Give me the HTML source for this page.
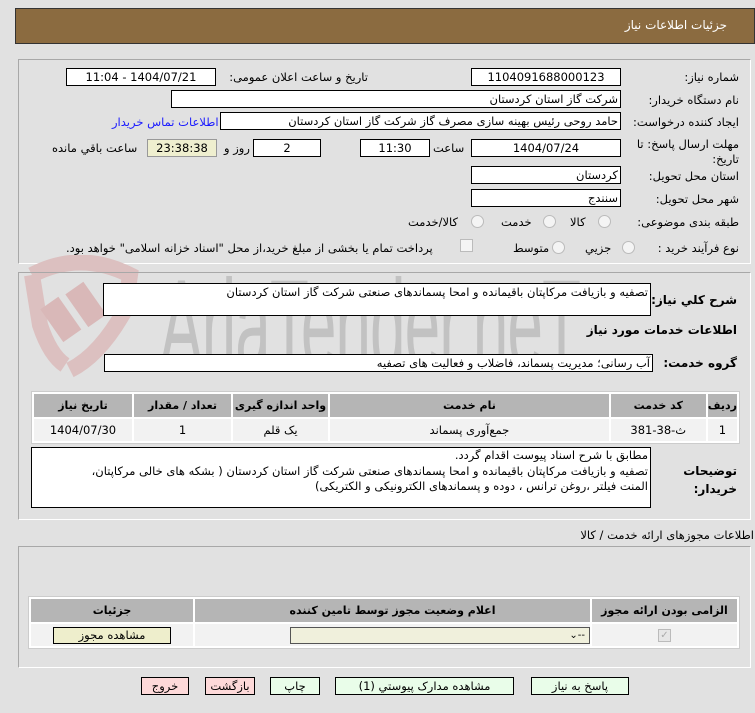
<!DOCTYPE html>
<html><head><meta charset="utf-8"><style>
*{margin:0;padding:0;box-sizing:border-box}
body{width:755px;height:713px;background:#e1e1e1;position:relative;overflow:hidden;font-family:"DejaVu Sans",sans-serif;font-size:11.5px;color:#000}
.a{position:absolute;white-space:nowrap}
.r{position:absolute;white-space:nowrap;direction:rtl;text-align:right}
.in{position:absolute;background:#fff;border:1px solid #000;direction:rtl;text-align:center;line-height:16px;white-space:nowrap;overflow:hidden}
.lbl{position:absolute;direction:rtl;white-space:nowrap}
.panel{position:absolute;border:1px solid #a8a8a8;border-right-color:#fff;border-bottom-color:#fff}
.rad{position:absolute;width:13px;height:13px;border-radius:50%;border:1px solid #bbb;background:#f4f4f4}
table{border-collapse:separate;border-spacing:2px;position:absolute;background:#fff;border:1px solid #ccc}
th{background:#b5b5b5;font-weight:bold;font-size:11px;height:23px;direction:rtl}
td{background:#f2f2f2;text-align:center;height:22px;direction:rtl}
.btn{position:absolute;border:1px solid #000;background:#e9fde9;text-align:center;line-height:16px;height:18px;direction:rtl}
</style></head><body>
<div class="a" style="left:15px;top:8px;width:740px;height:36px;background:#8b6b40;border:1px solid #333"></div>
<div class="r" style="right:28px;top:18px;color:#fff;font-size:12px">جزئیات اطلاعات نیاز</div>

<div class="panel" style="left:18px;top:59px;width:733px;height:205px"></div>
<!-- watermark -->
<svg class="a" style="left:20px;top:255px" width="130" height="130" viewBox="0 0 130 130"><path d="M12 20 Q60 -5 110 20 L105 55 Q80 100 50 115" fill="none" stroke="#dcc0c0" stroke-width="16"/><path d="M12 20 L20 70 Q30 100 45 110" fill="none" stroke="#dcc0c0" stroke-width="16"/><rect x="30" y="45" width="22" height="40" fill="#d9b8b8" transform="rotate(-35 40 65)"/><rect x="55" y="30" width="22" height="40" fill="#d9b8b8" transform="rotate(-35 65 50)"/></svg>
<div class="a" style="left:160px;top:262px;font-family:'Liberation Sans',sans-serif;font-size:128px;color:#c2c2c2;letter-spacing:-2px;transform:scaleX(0.5);transform-origin:left top;line-height:128px">AriaTender.neT</div>

<div class="lbl" style="right:16px;top:70px">شماره نیاز:</div>
<div class="in" style="left:471px;top:68px;width:150px;height:18px">1104091688000123</div>
<div class="lbl" style="right:387px;top:70px">تاریخ و ساعت اعلان عمومی:</div>
<div class="in" style="left:66px;top:68px;width:150px;height:18px">1404/07/21 - 11:04</div>

<div class="lbl" style="right:16px;top:93px">نام دستگاه خریدار:</div>
<div class="in" style="left:171px;top:90px;width:450px;height:18px;text-align:right;padding-right:2px">شرکت گاز استان کردستان</div>

<div class="lbl" style="right:16px;top:115px">ایجاد کننده درخواست:</div>
<div class="in" style="left:220px;top:112px;width:401px;height:18px;text-align:right;padding-right:2px">حامد روحی رئیس بهینه سازی مصرف گاز شرکت گاز استان کردستان</div>
<div class="lbl" style="left:112px;top:115px;color:#1a1aff">اطلاعات تماس خریدار</div>

<div class="lbl" style="right:16px;top:137px;text-align:right;line-height:15px">مهلت ارسال پاسخ: تا<br>تاریخ:</div>
<div class="in" style="left:471px;top:139px;width:150px;height:18px">1404/07/24</div>
<div class="lbl" style="left:433px;top:141px">ساعت</div>
<div class="in" style="left:360px;top:139px;width:70px;height:18px">11:30</div>
<div class="in" style="left:253px;top:139px;width:68px;height:18px">2</div>
<div class="lbl" style="left:224px;top:141px">روز و</div>
<div class="in" style="left:147px;top:139px;width:70px;height:18px;background:#efefcf;border-color:#999">23:38:38</div>
<div class="lbl" style="left:52px;top:141px">ساعت باقي مانده</div>

<div class="lbl" style="right:16px;top:169px">استان محل تحویل:</div>
<div class="in" style="left:471px;top:166px;width:150px;height:18px;text-align:right;padding-right:2px">کردستان</div>
<div class="lbl" style="right:16px;top:192px">شهر محل تحویل:</div>
<div class="in" style="left:471px;top:189px;width:150px;height:18px;text-align:right;padding-right:2px">سنندج</div>

<div class="lbl" style="right:16px;top:215px">طبقه بندی موضوعی:</div>
<div class="rad" style="left:598px;top:215px"></div><div class="lbl" style="left:570px;top:215px">کالا</div>
<div class="rad" style="left:543px;top:215px"></div><div class="lbl" style="left:501px;top:215px">خدمت</div>
<div class="rad" style="left:471px;top:215px"></div><div class="lbl" style="left:408px;top:215px">کالا/خدمت</div>

<div class="lbl" style="right:16px;top:241px">نوع فرآیند خرید :</div>
<div class="rad" style="left:622px;top:241px"></div><div class="lbl" style="left:585px;top:241px">جزيي</div>
<div class="rad" style="left:552px;top:241px"></div><div class="lbl" style="left:513px;top:241px">متوسط</div>
<div class="a" style="left:460px;top:239px;width:13px;height:13px;border:1px solid #bbb;background:#f4f4f4"></div>
<div class="lbl" style="left:66px;top:241px">پرداخت تمام یا بخشی از مبلغ خرید،از محل "اسناد خزانه اسلامی" خواهد بود.</div>

<div class="panel" style="left:18px;top:272px;width:733px;height:248px"></div>
<div class="lbl" style="right:18px;top:293px;font-weight:bold;font-size:12px">شرح کلي نیاز:</div>
<div class="in" style="left:103px;top:283px;width:548px;height:33px;text-align:right;padding-right:2px;line-height:16px">تصفیه و بازیافت مرکاپتان باقیمانده و امحا پسماندهای صنعتی شرکت گاز استان کردستان</div>
<div class="lbl" style="right:18px;top:323px;font-weight:bold;font-size:12px">اطلاعات خدمات مورد نیاز</div>
<div class="lbl" style="right:18px;top:356px;font-weight:bold;font-size:12px">گروه خدمت:</div>
<div class="in" style="left:104px;top:354px;width:549px;height:18px;text-align:right;padding-right:2px">آب رسانی؛ مدیریت پسماند، فاضلاب و فعالیت های تصفیه</div>

<table style="left:31px;top:391px;width:709px">
<tr><th style="width:98px">تاریخ نیاز</th><th style="width:97px">تعداد / مقدار</th><th style="width:95px">واحد اندازه گیری</th><th>نام خدمت</th><th style="width:95px">کد خدمت</th><th style="width:29px">ردیف</th></tr>
<tr><td>1404/07/30</td><td>1</td><td>یک قلم</td><td>جمع‌آوری پسماند</td><td>ث-38-381</td><td>1</td></tr>
</table>

<div class="lbl" style="right:18px;top:462px;font-weight:bold;font-size:12px;text-align:right;line-height:18px">توضیحات<br>خریدار:</div>
<div class="in" style="left:31px;top:447px;width:620px;height:61px;text-align:right;padding-right:2px;line-height:15.5px">مطابق با شرح اسناد پیوست اقدام گردد.<br>تصفیه و بازیافت مرکاپتان باقیمانده و امحا پسماندهای صنعتی شرکت گاز استان کردستان ( بشکه های خالی مرکاپتان،<br>المنت فیلتر ،روغن ترانس ، دوده و پسماندهای الکترونیکی و الکتریکی)</div>

<div class="lbl" style="right:1px;top:528px">اطلاعات مجوزهای ارائه خدمت / کالا</div>
<div class="panel" style="left:18px;top:546px;width:733px;height:122px"></div>
<table style="left:28px;top:596px;width:712px">
<tr><th style="width:162px">جزئیات</th><th>اعلام وضعیت مجوز توسط تامین کننده</th><th style="width:145px">الزامی بودن ارائه مجوز</th></tr>
<tr><td><div style="margin:0 auto;width:118px;height:17px;border:1px solid #000;background:#eeeecc;line-height:15px">مشاهده مجوز</div></td>
<td><div style="margin-left:48px;width:300px;height:17px;border:1px solid #555;background:#f0f0dc;text-align:right;padding:0 4px;line-height:15px;direction:ltr;font-size:10px">&#8964;<span style="float:right">--</span></div></td>
<td><div style="margin:0 auto;width:13px;height:13px;border:1px solid #bbb;background:#e6e6e6;font-size:10px;line-height:11px;color:#aaa">✓</div></td></tr>
</table>

<div class="btn" style="left:531px;top:677px;width:98px">پاسخ به نیاز</div>
<div class="btn" style="left:335px;top:677px;width:179px">مشاهده مدارک پیوستي (1)</div>
<div class="btn" style="left:270px;top:677px;width:50px">چاپ</div>
<div class="btn" style="left:205px;top:677px;width:50px;background:#fdd9d9">بازگشت</div>
<div class="btn" style="left:141px;top:677px;width:48px;background:#fdd9d9">خروج</div>
</body></html>
